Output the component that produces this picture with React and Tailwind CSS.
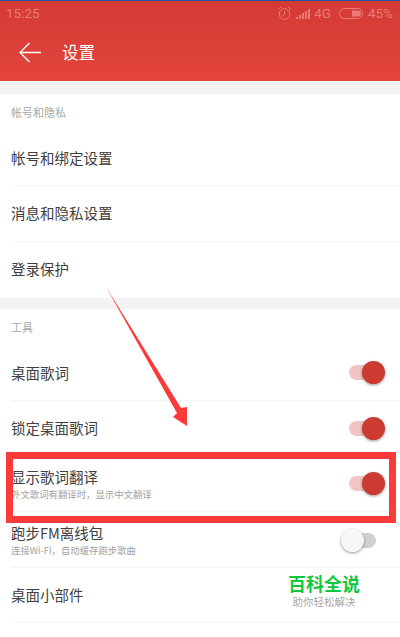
import React from 'react';

const font = { fontFamily: '"Noto Sans CJK SC", "Noto Sans", sans-serif' };

const Toggle = ({ on }) => (
  <div className={`relative w-[29px] h-[15px] ${on ? '' : 'mr-[2px] mt-[3px]'}`}>
    <div className={`w-full h-full rounded-full ${on ? 'bg-[#f2c4c2]' : 'bg-[#d0d0d0]'}`} />
    <div
      className={`absolute top-[-4px] w-[23px] h-[23px] rounded-full shadow-[0_1px_3px_rgba(0,0,0,0.4)] ${
        on ? 'right-[-7px] bg-[#cd3a31]' : 'left-[-6px] bg-[#f7f7f7]'
      }`}
    />
  </div>
);

const Row = ({ title, sub, toggle, last }) => (
  <div className={`h-[55.5px] flex items-center justify-between pr-[22px] ${last ? '' : 'border-b border-[#f4f4f4]'}`}>
    <div className="flex flex-col">
      <span className="text-[14.5px] leading-[20px] text-[#404040]">{title}</span>
      {sub && <span className="text-[9.4px] leading-[12px] text-[#a2a2a2] mt-[1px]">{sub}</span>}
    </div>
    {toggle !== undefined && <Toggle on={toggle} />}
  </div>
);

const Section = ({ label, children }) => (
  <div className="bg-white pl-[11px] pb-[1px]">
    <div className="h-[36.5px] flex items-center text-[11px] text-[#a8a8a8]">{label}</div>
    {children}
  </div>
);

export default function App() {
  return (
    <div className="relative w-[400px] h-[637px] overflow-hidden bg-white" style={font}>
      <div className="h-[81px] bg-gradient-to-b from-[#d43a34] to-[#e3443c] border-t border-[#1c4fa0]">
        <div className="h-[25px] flex items-center justify-between pl-[6px] pr-[7px] text-[13.5px] text-[#e97d76]">
          <span style={{ fontFamily: '"Roboto", sans-serif' }}>15:25</span>
          <div className="flex items-center" style={{ fontFamily: '"Roboto", sans-serif' }}>
            <svg width="15" height="15" viewBox="0 0 15 15" fill="none" stroke="#e97d76" strokeWidth="1">
              <circle cx="7.5" cy="8" r="5.3" />
              <path d="M7.5 5v3.5l-2 1M1 3.5l3-2.5M14 3.5l-3-2.5" />
            </svg>
            <svg width="14" height="10" viewBox="0 0 14 10" fill="#e97d76" className="ml-[4px]">
              <rect x="0" y="8" width="2" height="2" />
              <rect x="3" y="6" width="2" height="4" />
              <rect x="6" y="4" width="2" height="6" />
              <rect x="9" y="2" width="2" height="8" />
              <rect x="12" y="0" width="2" height="10" />
            </svg>
            <span className="ml-[4px]">4G</span>
            <svg width="24" height="11" viewBox="0 0 24 11" fill="none" className="ml-[8px]">
              <rect x="0.5" y="0.5" width="23" height="10" rx="5" stroke="#e97d76" />
              <path d="M13 2.5h6a3 3 0 0 1 0 6h-6z" fill="#e97d76" />
            </svg>
            <span className="ml-[5px]">45%</span>
          </div>
        </div>
        <div className="flex items-center pl-[19px] h-[53px] gap-[20px]">
          <svg width="23" height="21" viewBox="0 0 23 21" fill="none" stroke="#fff" strokeWidth="1.3">
            <path d="M22 10.5H1M10.5 1L1 10.5L10.5 20" />
          </svg>
          <span className="text-[16.5px] text-white">设置</span>
        </div>
      </div>

      <div className="h-[13px] bg-[#f3f3f3]" />
      <Section label="帐号和隐私">
        <Row title="帐号和绑定设置" />
        <Row title="消息和隐私设置" />
        <Row title="登录保护" last />
      </Section>
      <div className="h-[11px] bg-[#f3f3f3]" />
      <Section label="工具">
        <Row title="桌面歌词" toggle={true} />
        <Row title="锁定桌面歌词" toggle={true} />
        <Row title="显示歌词翻译" sub="外文歌词有翻译时，显示中文翻译" toggle={true} />
        <Row title="跑步FM离线包" sub="连接Wi-Fi，自动缓存跑步歌曲" toggle={false} />
        <Row title="桌面小部件" />
      </Section>

      {/* annotation painted on top of the screenshot */}
      <div className="absolute left-[6px] top-[452px] w-[390px] h-[71px] border-[7px] border-[#fd3a3a]" />
      <svg className="absolute left-[100px] top-[280px]" width="95" height="150" viewBox="0 0 95 150">
        <path d="M6 7L81 128L87 127L87 146L73 137L77 133Z" fill="#fd3a3a" />
      </svg>
      <div className="absolute left-[272px] top-[571px] w-[104px] flex flex-col items-center">
        <span className="text-[18px] leading-[24px] font-bold text-[#12c63c]">百科全说</span>
        <span className="text-[10.5px] leading-[14px] text-[#a5a5a5]">助你轻松解决</span>
      </div>
    </div>
  );
}
